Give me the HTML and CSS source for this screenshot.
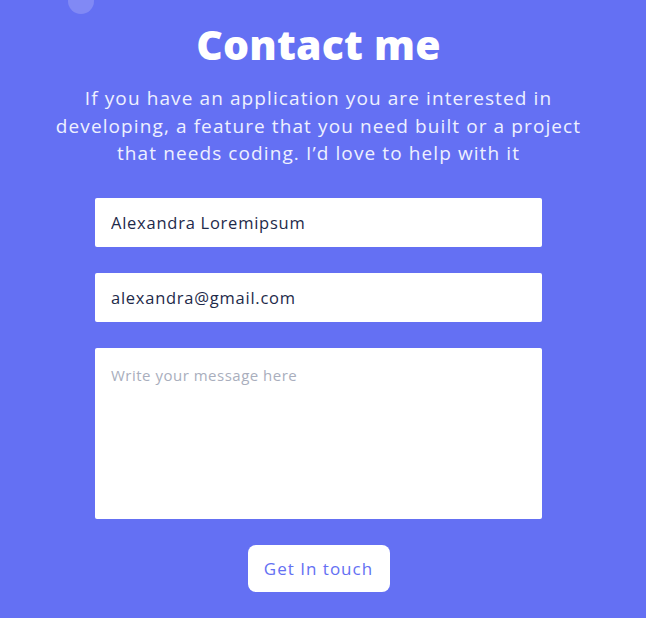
FILE: index.html
```html
<!DOCTYPE html>
<html lang="en">
<head>
<meta charset="utf-8">
<title>Contact me</title>
<link rel="stylesheet" href="styles.css">
</head>
<body>
<section class="contact">
  <span class="blob" aria-hidden="true"></span>
  <h1 class="title">Contact me</h1>
  <p class="lead">If you have an application you are interested in developing, a feature that you need built or a project that needs coding. I’d love to help with it</p>
  <form class="form">
    <input class="field" type="text" value="Alexandra Loremipsum">
    <input class="field" type="email" value="alexandra@gmail.com">
    <textarea class="field area" placeholder="Write your message here"></textarea>
    <button class="btn" type="button">Get In touch</button>
  </form>
</section>
</body>
</html>
```
FILE: styles.css
```css
html, body {
  margin: 0;
  padding: 0;
}
body {
  background: #6470f3;
  font-family: "Open Sans", "DejaVu Sans", sans-serif;
  height: 618px;
  overflow: hidden;
}
.contact {
  position: relative;
  display: flex;
  flex-direction: column;
  align-items: center;
  padding: 20px 9px 0 0;
}
.blob {
  position: absolute;
  left: 68px;
  top: -12px;
  width: 26px;
  height: 26px;
  border-radius: 50%;
  background: #8189f5;
}
.title {
  margin: 0;
  color: #ffffff;
  font-size: 41px;
  line-height: 48px;
  font-weight: 800;
  letter-spacing: 0.2px;
}
.lead {
  margin: 17px 0 0;
  width: 540px;
  text-align: center;
  color: #eef0ff;
  font-size: 19px;
  line-height: 27.5px;
  font-weight: 400;
  letter-spacing: 1.1px;
}
.form {
  margin-top: 30px;
  width: 447px;
  display: flex;
  flex-direction: column;
  align-items: center;
  gap: 26px;
}
.field {
  box-sizing: border-box;
  width: 100%;
  height: 49px;
  border: none;
  border-radius: 2px;
  background: #ffffff;
  padding: 0 16px;
  font-family: inherit;
  font-size: 16.5px;
  letter-spacing: 0.75px;
  color: #1e2a4a;
  outline: none;
}
.area {
  height: 171px;
  padding: 17px 16px;
  resize: none;
  font-size: 15px;
  letter-spacing: 0.5px;
}
.area::placeholder {
  color: #a9aebd;
}
.btn {
  width: 142px;
  height: 47px;
  border: none;
  border-radius: 8px;
  background: #ffffff;
  color: #6470f3;
  font-family: inherit;
  font-size: 17px;
  font-weight: 500;
  letter-spacing: 1px;
  cursor: pointer;
}
```
